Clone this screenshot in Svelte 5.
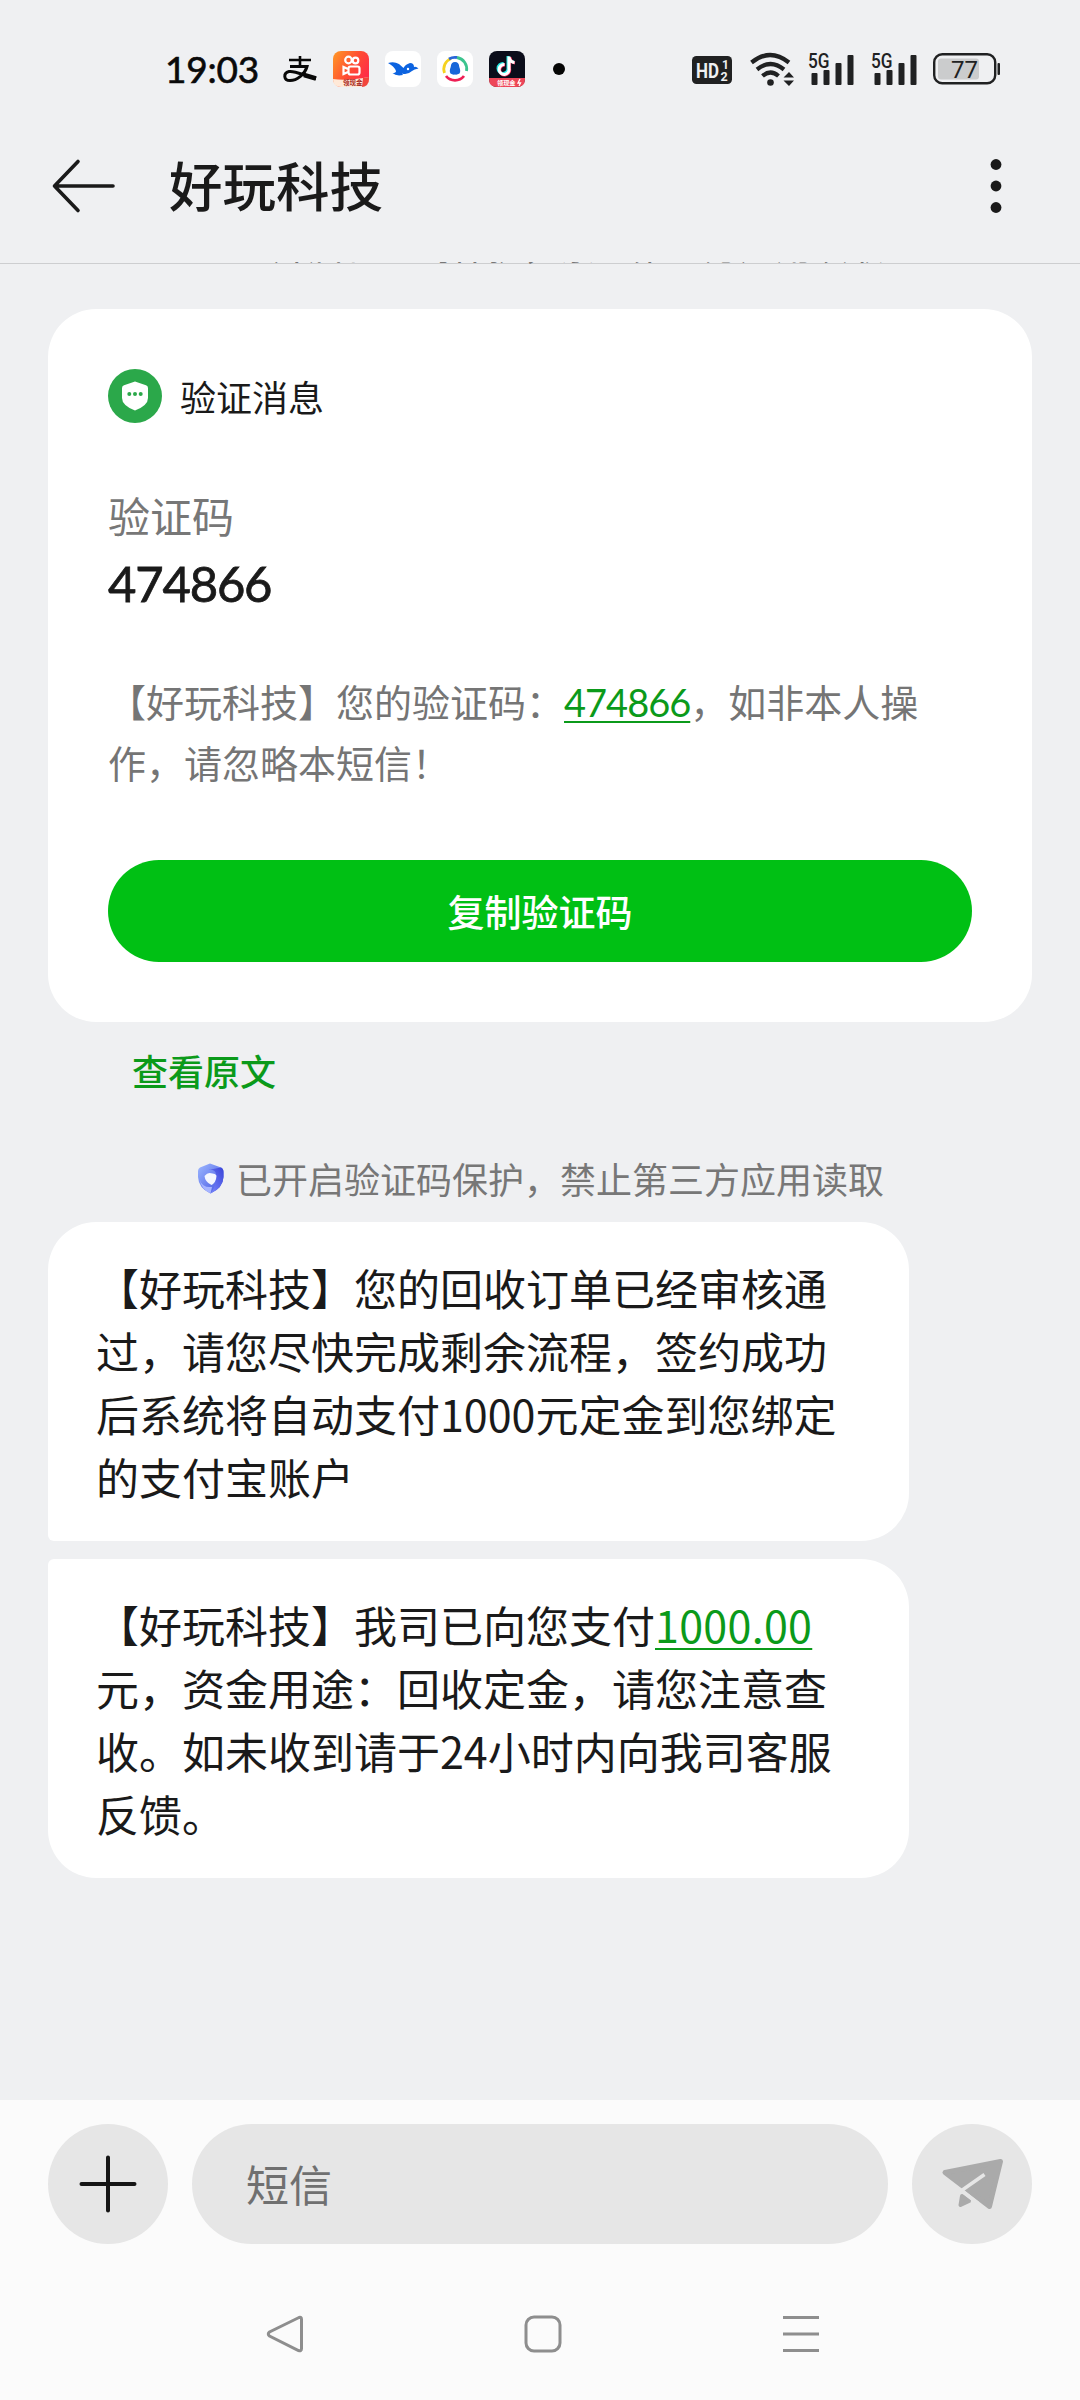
<script lang="ts">
interface Part {
	text: string;
	link?: boolean;
}

const sender = '好玩科技';
const code = '474866';
const notice = '已开启验证码保护，禁止第三方应用读取';

const messages: { id: number; parts: Part[] }[] = [
	{
		id: 1,
		parts: [{ text: '【好玩科技】您的回收订单已经审核通过，请您尽快完成剩余流程，签约成功后系统将自动支付1000元定金到您绑定的支付宝账户' }],
	},
	{
		id: 2,
		parts: [
			{ text: '【好玩科技】我司已向您支付' },
			{ text: '1000.00', link: true },
			{ text: '元，资金用途：回收定金，请您注意查收。如未收到请于24小时内向我司客服反馈。' },
		],
	},
];
</script>

{#snippet protection()}
	<svg class="guard" viewBox="0 0 27 31">
		<defs>
			<linearGradient id="guard-a" x1="0" y1="0" x2="1" y2="1">
				<stop offset="0" stop-color="#9db8ff" />
				<stop offset="1" stop-color="#3f4fe0" />
			</linearGradient>
			<linearGradient id="guard-b" x1="1" y1="0" x2="0" y2="1">
				<stop offset="0" stop-color="#3a45d8" />
				<stop offset="1" stop-color="#7f8cff" />
			</linearGradient>
		</defs>
		<path d="M13 0.5 L24 4.5 Q26.500 5.500 26.500 9 V14 Q26 25 13.500 30.500 Q1.500 25 1 14 V8 Q1 5.500 3 4.500 Z" fill="url(#guard-a)" />
		<path d="M19 11 Q18 6 11 7 L24 4.500 Q26.500 5.500 26.500 9 V14 Q26 25 13.500 30.500 Q20 22 19 11 Z" fill="url(#guard-b)" />
		<path d="M3 17 Q5 25 15 24 L13.500 30.500 Q4 26 3 17 Z" fill="#a6b4ff" />
		<path d="M12.500 10 Q19.500 10.500 19.500 13 Q19 19.500 14.500 22 Q8 19 7.500 13 Q10 10 12.500 10 Z" fill="#f4f6ff" />
	</svg>
	<span>{notice}</span>
{/snippet}

{#snippet signal()}
	<svg class="signal" viewBox="0 0 46 34">
		<text x="0" y="16" font-size="19.500" font-weight="500" textLength="21.500" lengthAdjust="spacingAndGlyphs">5G</text>
		<rect x="3.500" y="21" width="6" height="12" rx="1" />
		<rect x="15.500" y="18" width="6" height="15" rx="1" />
		<rect x="27.500" y="11" width="6" height="22" rx="1" />
		<rect x="39.500" y="3" width="6" height="30" rx="1" />
	</svg>
{/snippet}

<div class="screen">
	<div class="status">
		<span class="time">19:03</span>
		<div class="apps">
			<svg width="34" height="36" viewBox="0 0 34 36">
				<g fill="none" stroke="#090909" stroke-linecap="butt">
					<path d="M6 9 H28 M17 5 V15" stroke-width="2.600" />
					<path d="M7 15.500 H24 C22 23 14 29.500 7 29.500 C0.500 29.500 0 22 6 20.500 C13 19.500 21 25 33 27.500" stroke-width="3" />
					<path d="M21 24 L33 27.500" stroke-width="4.500" />
				</g>
			</svg>
			<svg width="36" height="36" viewBox="0 0 36 36">
				<defs>
					<linearGradient id="ks" x1="0" y1="0" x2="1" y2="0.6">
						<stop offset="0" stop-color="#ff9a26" />
						<stop offset="0.600" stop-color="#ff4a33" />
						<stop offset="1" stop-color="#ff2d48" />
					</linearGradient>
				</defs>
				<rect width="36" height="36" rx="8" fill="url(#ks)" />
				<g fill="none" stroke="#fff" stroke-width="2.200">
					<circle cx="15.500" cy="9" r="3.300" />
					<circle cx="22.500" cy="9.500" r="2.800" />
					<rect x="15.500" y="15.500" width="11" height="8" rx="2" />
					<path d="M15 18 L10.500 16 V23 L15 21" />
				</g>
				<path d="M0 28 Q14 30 36 26 V28 Q36 36 28 36 H8 Q0 36 0 28 Z" fill="#ffe9d8" />
				<path d="M30 27 L36 26 V28 Q36 35 29 36 Z" fill="#f2453c" />
				<text x="10" y="34" font-size="6.500" font-weight="700" fill="#a8281c">领现金</text>
			</svg>
			<svg width="36" height="36" viewBox="0 0 36 36">
				<rect width="36" height="36" rx="8" fill="#fff" />
				<path d="M3 12 Q9 10 14 13 L18.500 17 Q20 13.500 25 12 Q29 12 29 16 Q31 15 33.500 17.500 Q29 18 27 20 Q22 24.500 17 22.500 L18 24 Q11 25.500 7.500 22 Q11 22 11 20 Q9 15 3 12 Z" fill="#0c63e0" />
				<circle cx="23" cy="18" r="1.200" fill="#fff" />
			</svg>
			<svg width="36" height="36" viewBox="0 0 36 36">
				<rect width="36" height="36" rx="8" fill="#fff" />
				<g fill="none" stroke-width="2.800">
					<path d="M7.500 22 A11.500 11.500 0 0 1 14 7.500" stroke="#f5d21f" />
					<path d="M20 6.500 A11.500 11.500 0 0 1 29.500 20" stroke="#3cc48e" />
					<path d="M9 25 A11.500 11.500 0 0 0 27 25" stroke="#ee1f55" />
					<path d="M12 8 A11.500 11.500 0 0 1 20 6.500" stroke="#2a66d8" />
				</g>
				<path d="M18 11 Q22 11 22.300 16 Q24 20 22.500 22.500 Q20 24 18 23.500 Q15.500 24 13.500 22.500 Q12 20 13.700 16 Q14 11 18 11 Z" fill="#1666d9" />
			</svg>
			<svg width="36" height="36" viewBox="0 0 36 36">
				<rect width="36" height="36" rx="8" fill="#0b0d1a" />
				<g fill="none" stroke-width="3">
					<path d="M19 5 V17 A5 5 0 1 1 14.500 12.500 M19 5.500 Q20 10.500 25 11" stroke="#25e8e2" />
					<path d="M20.600 6 V18 A5 5 0 1 1 16 14 M21 6.500 Q22 11.500 26 12" stroke="#fb2d59" />
					<path d="M20 5.500 V17.500 A5 5 0 1 1 15.500 13.500 M20 6 Q21 11 25.500 11.500" stroke="#fff" />
				</g>
				<path d="M0 27 H36 V28 Q36 36 28 36 H8 Q0 36 0 28 Z" fill="#ee4658" />
				<text x="8" y="34" font-size="6.200" font-weight="700" fill="#fff">领现金</text>
				<path d="M31 28 L29 32 H31.500 L30 35" fill="none" stroke="#fff" stroke-width="1.300" />
			</svg>
		</div>
		<i class="more-dot"></i>
		<div class="radio">
			<svg class="hd" viewBox="0 0 40 28">
				<rect width="40" height="28" rx="4.500" />
				<text x="4" y="21.500" font-size="21" font-weight="700" fill="#eff0f2" textLength="23" lengthAdjust="spacingAndGlyphs">HD</text>
				<text x="30" y="13" font-size="12" font-weight="700" fill="#eff0f2">1</text>
				<text x="28.500" y="24.500" font-size="12.500" font-weight="700" fill="#eff0f2">2</text>
			</svg>
			<svg class="wifi" viewBox="0 0 44 34">
				<g fill="none" stroke="#202122" stroke-width="4.200">
					<path d="M1.500 10.500 Q20 -4.500 39 10.500" />
					<path d="M7 17.500 Q20.500 6.500 34 17.500" />
					<path d="M12.500 24 Q20.500 17 28.500 24" />
				</g>
				<circle cx="20.500" cy="30.500" r="3.300" />
				<path d="M33.500 25.500 L39 20 L44 25.500 Z M33.500 28.500 H44 L39 34 Z" />
			</svg>
			{@render signal()}
			{@render signal()}
			<svg class="battery" viewBox="0 0 68 32">
				<rect x="1.200" y="1.200" width="61" height="29" rx="8" fill="none" stroke="#202122" stroke-width="2.400" />
				<rect x="5" y="5.500" width="41" height="21" rx="3" fill="#cbcccd" />
				<rect x="64.500" y="10" width="2.500" height="12" rx="1" />
				<text x="31.500" y="24.500" font-size="24" text-anchor="middle" textLength="27">77</text>
			</svg>
		</div>
	</div>

	<header class="bar">
		<svg class="back" viewBox="0 0 64 52">
			<path d="M27 1.500 L3.500 26 L27 50.500 M3.500 26 H62" fill="none" stroke="#1a1a1a" stroke-width="3.600" stroke-linecap="round" stroke-linejoin="round" />
		</svg>
		<h1>{sender}</h1>
		<svg class="menu" viewBox="0 0 12 56">
			<circle cx="6" cy="6.500" r="5.400" />
			<circle cx="6" cy="28" r="5.400" />
			<circle cx="6" cy="49.500" r="5.400" />
		</svg>
	</header>

	<main class="thread">
		<!-- scrolled almost completely under the title bar -->
		<p class="notice scrolled">{@render protection()}</p>

		<section class="card">
			<div class="card-head">
				<svg class="badge" viewBox="0 0 54 54">
					<circle cx="27" cy="27" r="27" fill="#2ba84a" />
					<path d="M27 12.500 L38 16.300 Q40 17 40 19 V29 Q40 36.500 27 41.500 Q14 36.500 14 29 V19 Q14 17 16 16.300 Z" fill="#fff" />
					<g fill="#2ba84a">
						<circle cx="21.300" cy="25" r="2" />
						<circle cx="27" cy="25" r="2" />
						<circle cx="32.700" cy="25" r="2" />
					</g>
				</svg>
				<span>验证消息</span>
			</div>
			<div class="label">验证码</div>
			<div class="code">{code}</div>
			<p class="body">【好玩科技】您的验证码：<a class="num" href="#code">{code}</a>，如非本人操作，请忽略本短信！</p>
			<button class="copy">复制验证码</button>
		</section>

		<a class="original" href="#original">查看原文</a>
		<p class="notice">{@render protection()}</p>

		<div class="bubbles">
			{#each messages as message (message.id)}
				<div class="bubble">
					{#each message.parts as part}{#if part.link}<a href="#amount">{part.text}</a>{:else}{part.text}{/if}{/each}
				</div>
			{/each}
		</div>
	</main>

	<footer>
		<div class="composer">
			<div class="round">
				<svg width="120" height="120" viewBox="0 0 120 120">
					<path d="M60 33.500 V86.500 M33.500 60 H86.500" stroke="#161616" stroke-width="4" stroke-linecap="round" />
				</svg>
			</div>
			<div class="field">短信</div>
			<div class="round">
				<svg width="120" height="120" viewBox="0 0 120 120">
					<g fill="#aaa" stroke="#aaa" stroke-width="5" stroke-linejoin="round">
						<path d="M33 48.500 L88.500 37.500 L77.500 82.500 Z" />
						<path d="M50 72 L57 77 L48.500 81 Z" stroke-width="4" />
					</g>
					<path d="M72.500 50.500 L49.500 66.500 L66 79.500" fill="none" stroke="#e6e6e6" stroke-width="3.600" />
				</svg>
			</div>
		</div>
		<nav>
			<svg width="40" height="40" viewBox="0 0 40 40">
				<path d="M34 3.500 Q36.500 2.500 36.500 5.500 V34.500 Q36.500 37.500 33.500 36.500 L4.500 22 Q2 20 4.500 18 Z" />
			</svg>
			<svg width="40" height="40" viewBox="0 0 40 40">
				<rect x="3" y="3" width="34" height="34" rx="8" />
			</svg>
			<svg width="40" height="40" viewBox="0 0 40 40">
				<path d="M2 3.500 H38 M2 20 H38 M2 36.500 H38" />
			</svg>
		</nav>
	</footer>
</div>

<style>
	:global(body) {
		margin: 0;
		background: #eff0f2;
	}
	.screen {
		display: flex;
		flex-direction: column;
		width: 1080px;
		height: 2400px;
		overflow: hidden;
		background: #eff0f2;
		color: #1a1a1a;
		font-family: 'Noto Sans CJK SC', 'Noto Sans', sans-serif;
	}
	svg {
		display: block;
		flex: none;
		overflow: visible;
	}
	p,
	h1 {
		margin: 0;
		font-weight: 400;
	}
	a {
		color: #0b9a1a;
	}

	.status {
		display: flex;
		align-items: center;
		box-sizing: border-box;
		height: 136px;
		padding: 1px 79px 0 165px;
		flex: none;
		fill: #202122;
	}
	.time {
		width: 118px;
		font-family: Lato, sans-serif;
		font-size: 37px;
		letter-spacing: -0.2px;
		line-height: 40px;
		color: #0a0a0a;
		-webkit-text-stroke: 0.6px #0a0a0a;
	}
	.apps {
		display: flex;
		gap: 16px;
	}
	.more-dot {
		width: 12px;
		height: 12px;
		margin-left: 28px;
		border-radius: 50%;
		background: #050505;
	}
	.radio {
		display: flex;
		align-items: center;
		margin-left: auto;
	}
	.radio text {
		font-family: Roboto, sans-serif;
	}
	.hd {
		width: 40px;
		height: 28px;
		margin: 3px 18px 0 0;
	}
	.wifi {
		width: 44px;
		height: 34px;
		margin-right: 14px;
	}
	.signal {
		width: 46px;
		height: 34px;
		margin-right: 17px;
	}
	.battery {
		width: 68px;
		height: 32px;
		margin-left: -1px;
	}

	.bar {
		display: flex;
		align-items: center;
		box-sizing: border-box;
		height: 128px;
		padding: 0 78px 28px 51px;
		border-bottom: 1px solid #cdced0;
		flex: none;
	}
	.back {
		width: 64px;
		height: 52px;
	}
	h1 {
		flex: 1;
		margin: -3px 0 0 54px;
		font-size: 53.500px;
		font-weight: 500;
		line-height: 80px;
	}
	.menu {
		width: 12px;
		height: 56px;
		fill: #1a1a1a;
	}

	.thread {
		display: flex;
		flex-direction: column;
		height: 1838px;
		margin-top: -2px;
		flex: none;
		overflow: hidden;
	}
	.notice {
		display: flex;
		align-items: center;
		height: 52px;
		padding-left: 197px;
		margin-top: 56px;
		font-size: 36px;
		line-height: 52px;
		color: #777;
		white-space: nowrap;
		flex: none;
	}
	.notice.scrolled {
		margin-top: -44px;
	}
	.guard {
		width: 27px;
		height: 31px;
		margin-right: 12px;
	}

	.card {
		box-sizing: border-box;
		height: 713px;
		margin: 39px 48px 0;
		padding: 60px 60px 0;
		border-radius: 48px;
		background: #fff;
		flex: none;
	}
	.card-head {
		display: flex;
		align-items: center;
		gap: 18px;
		height: 54px;
		font-size: 36px;
		line-height: 54px;
	}
	.badge {
		width: 54px;
		height: 54px;
	}
	.label {
		margin-top: 62px;
		font-size: 42px;
		line-height: 60px;
		color: #777;
	}
	.code {
		margin-top: 8px;
		font-family: Lato, sans-serif;
		font-size: 49px;
		letter-spacing: -1.2px;
		line-height: 60px;
		-webkit-text-stroke: 0.8px #1a1a1a;
	}
	.body {
		margin-top: 58px;
		font-size: 38px;
		line-height: 60px;
		color: #757575;
	}
	.num {
		font-family: Lato, sans-serif;
		letter-spacing: -1px;
		text-underline-offset: 4px;
		text-decoration-thickness: 2px;
	}
	.copy {
		display: block;
		width: 100%;
		height: 102px;
		margin-top: 68px;
		padding: 0;
		border: 0;
		border-radius: 51px;
		background: #00c014;
		color: #fff;
		font: inherit;
		font-size: 37px;
		font-weight: 500;
	}

	.original {
		margin: 22px 0 0 132px;
		font-size: 36px;
		font-weight: 500;
		line-height: 52px;
		text-decoration: none;
	}

	.bubbles {
		display: flex;
		flex-direction: column;
		gap: 18px;
		margin: 18px 0 0 48px;
	}
	.bubble {
		box-sizing: border-box;
		width: 861px;
		height: 319px;
		padding: 34px 48px 0;
		border-radius: 48px 48px 48px 6px;
		background: #fff;
		font-size: 43px;
		line-height: 63px;
	}
	.bubble + .bubble {
		border-radius: 6px 48px 48px 48px;
	}
	.bubble a {
		letter-spacing: 0.3px;
		text-underline-offset: 5px;
		text-decoration-thickness: 2px;
	}

	footer {
		flex: 1;
		background: #fbfbfb;
	}
	.composer {
		display: flex;
		gap: 24px;
		padding: 24px 48px 0;
	}
	.round {
		width: 120px;
		height: 120px;
		border-radius: 50%;
		background: #e6e6e6;
	}
	.field {
		flex: 1;
		height: 120px;
		padding-left: 54px;
		border-radius: 60px;
		background: #e6e6e6;
		font-size: 43px;
		line-height: 119px;
		color: #707070;
	}
	nav {
		display: flex;
		gap: 218px;
		padding: 70px 0 0 265px;
		fill: none;
		stroke: #8e8e8e;
		stroke-width: 3;
	}
</style>
